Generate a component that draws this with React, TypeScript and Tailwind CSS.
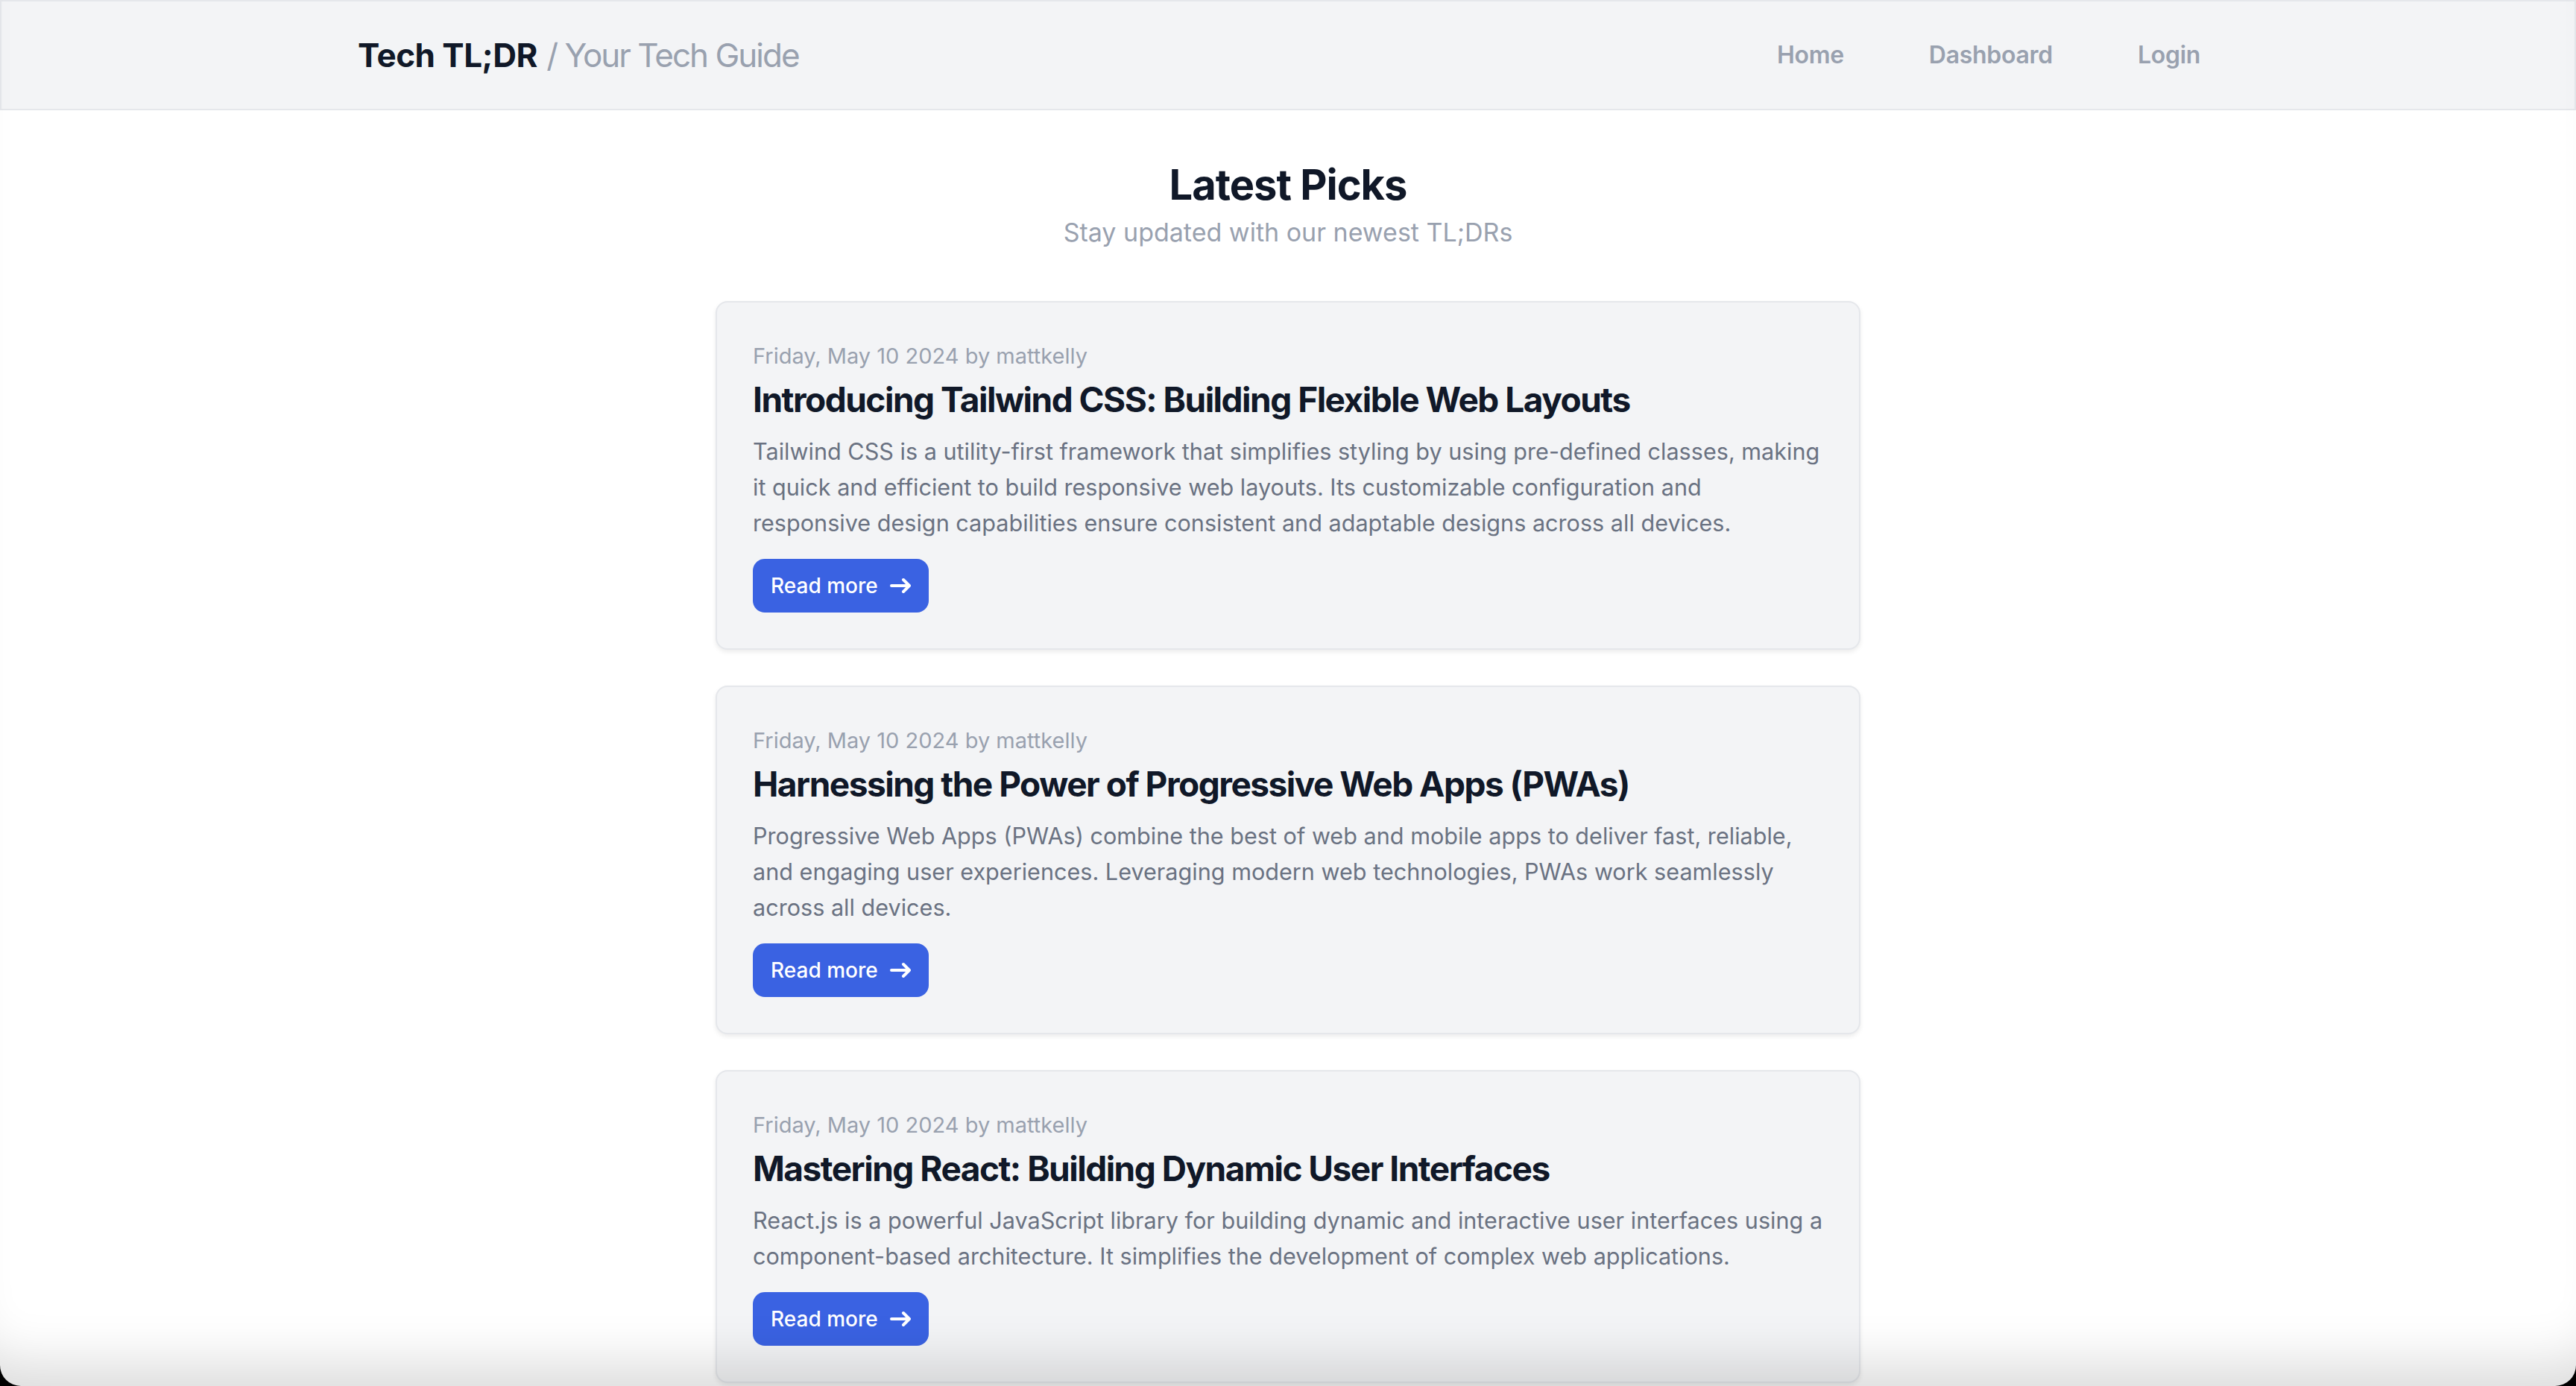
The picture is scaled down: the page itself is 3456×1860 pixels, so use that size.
import React from 'react';

interface Post {
  date: string;
  author: string;
  title: string;
  summary: string;
}

const posts: Post[] = [
  {
    date: 'Friday, May 10 2024',
    author: 'mattkelly',
    title: 'Introducing Tailwind CSS: Building Flexible Web Layouts',
    summary:
      'Tailwind CSS is a utility-first framework that simplifies styling by using pre-defined classes, making it quick and efficient to build responsive web layouts. Its customizable configuration and responsive design capabilities ensure consistent and adaptable designs across all devices.',
  },
  {
    date: 'Friday, May 10 2024',
    author: 'mattkelly',
    title: 'Harnessing the Power of Progressive Web Apps (PWAs)',
    summary:
      'Progressive Web Apps (PWAs) combine the best of web and mobile apps to deliver fast, reliable, and engaging user experiences. Leveraging modern web technologies, PWAs work seamlessly across all devices.',
  },
  {
    date: 'Friday, May 10 2024',
    author: 'mattkelly',
    title: 'Mastering React: Building Dynamic User Interfaces',
    summary:
      'React.js is a powerful JavaScript library for building dynamic and interactive user interfaces using a component-based architecture. It simplifies the development of complex web applications.',
  },
];

const Header: React.FC = () => {
  return (
    <header className="bg-gray-100 border-2 border-gray-200 h-[148px]">
      <div className="max-w-[2560px] mx-auto px-[32px] h-full flex items-center justify-between">
        <a href="#" className="text-[44px] leading-[64px]">
          <span className="font-bold tracking-[-0.5px] text-gray-900">Tech TL;DR</span>{' '}
          <span className="font-normal tracking-[-2px] text-gray-400">/ Your Tech Guide</span>
        </a>
        <nav className="flex items-center gap-[66px]">
          <a href="#" className="px-[24px] text-[32px] font-semibold tracking-[-0.3px] text-gray-400 hover:text-gray-600">
            Home
          </a>
          <a href="#" className="px-[24px] text-[32px] font-semibold tracking-[-0.3px] text-gray-400 hover:text-gray-600">
            Dashboard
          </a>
          <a href="#" className="px-[24px] text-[32px] font-semibold tracking-[-0.3px] text-gray-400 hover:text-gray-600">
            Login
          </a>
        </nav>
      </div>
    </header>
  );
};

const PostCard: React.FC<{ post: Post }> = ({ post }) => {
  return (
    <article className="bg-gray-100 border-2 border-gray-200 rounded-[16px] p-[48px] shadow-[0_3px_6px_rgba(0,0,0,0.08)]">
      <p className="mt-[4px] text-[29px] leading-[40px] text-gray-400">
        {post.date} by {post.author}
      </p>
      <h2 className="mt-[6px] text-[46px] leading-[64px] font-bold tracking-[-1.5px] text-gray-900">
        {post.title}
      </h2>
      <p className="mt-[14px] text-[30.6px] leading-[48px] text-gray-500">{post.summary}</p>
      <a
        href="#"
        className="mt-[24px] inline-flex items-center h-[72px] px-[24px] rounded-[16px] bg-[#3a62e2] text-white text-[28px] font-medium hover:bg-[#2f55d4]"
      >
        Read more
        <svg className="ml-[16px] w-[28px] h-[28px]" viewBox="0 0 14 10" fill="none" aria-hidden="true">
          <path d="M1 5h12m0 0L9 1m4 4L9 9" stroke="currentColor" strokeWidth="2" strokeLinecap="round" strokeLinejoin="round" />
        </svg>
      </a>
    </article>
  );
};

export default function App() {
  return (
    <div className="min-h-screen bg-white font-['Inter','Liberation_Sans',sans-serif]">
      <Header />
      <main className="pt-[64px] pb-[96px] px-[32px]">
        <div className="text-center">
          <h1 className="text-[56px] leading-[72px] font-bold tracking-[-1px] text-gray-900">Latest Picks</h1>
          <p className="text-[34px] leading-[56px] text-gray-400">Stay updated with our newest TL;DRs</p>
        </div>
        <div className="max-w-[1536px] mx-auto mt-[64px] flex flex-col gap-[48px]">
          {posts.map((post, i) => (
            <PostCard key={i} post={post} />
          ))}
        </div>
      </main>
      {/* window edge shading over the bottom of the viewport */}
      <div className="pointer-events-none fixed inset-0 rounded-b-[28px] shadow-[0_0_0_60px_#000,inset_0_-80px_70px_-50px_rgba(0,0,0,0.14)]" />
    </div>
  );
}
